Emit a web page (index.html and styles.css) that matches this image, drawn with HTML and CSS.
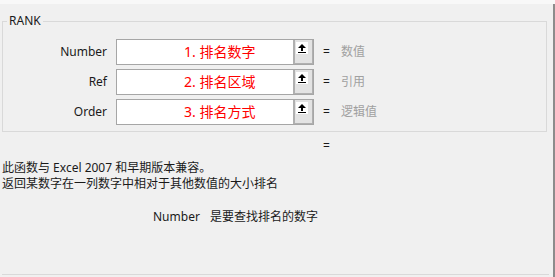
FILE: index.html
```html
<!DOCTYPE html>
<html lang="zh-CN">
<head>
    <meta charset="UTF-8">
    <title>函数参数 - RANK</title>
    <link rel="stylesheet" href="styles.css">
</head>
<body>
    <div class="top-strip"></div>

    <div class="dialog">
        <!-- 参数区 -->
        <fieldset class="args">
            <legend>RANK</legend>
            <div class="arg-grid">
                <div class="arg-label">Number</div>
                <div class="arg-field">
                    <div class="arg-text">1. 排名数字</div>
                    <div class="ref-btn">
                        <svg width="12" height="12" viewBox="0 0 12 12">
                            <rect width="12" height="12" fill="#fff"/>
                            <polygon points="2,6 6,2 10,6" fill="#000"/>
                            <rect x="5" y="5" width="2" height="4" fill="#000"/>
                            <rect x="2" y="10" width="8" height="1" fill="#000"/>
                        </svg>
                    </div>
                </div>
                <div class="arg-eq">=</div>
                <div class="arg-value">数值</div>

                <div class="arg-label">Ref</div>
                <div class="arg-field">
                    <div class="arg-text">2. 排名区域</div>
                    <div class="ref-btn">
                        <svg width="12" height="12" viewBox="0 0 12 12">
                            <rect width="12" height="12" fill="#fff"/>
                            <polygon points="2,6 6,2 10,6" fill="#000"/>
                            <rect x="5" y="5" width="2" height="4" fill="#000"/>
                            <rect x="2" y="10" width="8" height="1" fill="#000"/>
                        </svg>
                    </div>
                </div>
                <div class="arg-eq">=</div>
                <div class="arg-value">引用</div>

                <div class="arg-label">Order</div>
                <div class="arg-field">
                    <div class="arg-text">3. 排名方式</div>
                    <div class="ref-btn">
                        <svg width="12" height="12" viewBox="0 0 12 12">
                            <rect width="12" height="12" fill="#fff"/>
                            <polygon points="2,6 6,2 10,6" fill="#000"/>
                            <rect x="5" y="5" width="2" height="4" fill="#000"/>
                            <rect x="2" y="10" width="8" height="1" fill="#000"/>
                        </svg>
                    </div>
                </div>
                <div class="arg-eq">=</div>
                <div class="arg-value">逻辑值</div>
            </div>
        </fieldset>

        <div class="result">=</div>

        <!-- 函数说明 -->
        <div class="desc">
            <div>此函数与 Excel 2007 和早期版本兼容。</div>
            <div>返回某数字在一列数字中相对于其他数值的大小排名</div>
        </div>

        <div class="arg-help">
            <span class="arg-help-name">Number</span>
            <span>是要查找排名的数字</span>
        </div>

        <div class="bottom-rule"></div>
    </div>
</body>
</html>
```

FILE: styles.css
```css
:root {
    --bg-color: #f0f0f0;
    --line-color: #d9d9d9;
    --field-border: #a6a6a6;
    --hint-color: #a0a0a0;
}

body {
    margin: 0;
    padding: 0;
    width: 555px;
    height: 277px;
    overflow: hidden;
    background: var(--bg-color);
    font-family: 'Noto Sans', 'Noto Sans CJK SC', sans-serif;
    font-size: 12px;
    line-height: 16px;
    color: #1a1a1a;
}

.top-strip {
    height: 4px;
    background: #f8f8f8;
}

.dialog {
    height: 273px;
    box-sizing: border-box;
    border-right: 2px solid #8c8c8c;
    padding-bottom: 2px;
    display: flex;
    flex-direction: column;
}

/* 参数区 */
.args {
    margin: 9px 6px 0 2px;
    padding: 10px 0 6px 0;
    border: 1px solid var(--line-color);
    min-width: 0;
}

.args legend {
    margin-left: 4px;
    padding: 0 2px;
    line-height: 16px;
}

.arg-grid {
    display: grid;
    grid-template-columns: 104px 198px 9px auto;
    column-gap: 9px;
    row-gap: 4px;
    align-items: center;
}

.arg-label {
    text-align: right;
}

.arg-field {
    height: 26px;
    box-sizing: border-box;
    display: flex;
    background: #fff;
    border: 1px solid var(--field-border);
}

.arg-text {
    flex: 1;
    padding-left: 67px;
    font-size: 14px;
    line-height: 24px;
    color: #ff0000;
    white-space: nowrap;
}

.ref-btn {
    width: 20px;
    box-sizing: border-box;
    background: #e3e3e3;
    border-left: 2px solid #b0b0b0;
    border-right: 1px solid #b0b0b0;
    border-bottom: 1px solid #b0b0b0;
    display: flex;
    justify-content: flex-start;
    align-items: flex-start;
    padding: 2px 0 0 1px;
}

.ref-btn svg {
    display: block;
}

.arg-eq {
    text-align: left;
}

.arg-value {
    color: var(--hint-color);
}

/* 结果 & 说明 */
.result {
    margin-top: 6px;
    padding-left: 323px;
}

.desc {
    margin-top: 6px;
    padding-left: 2px;
}

.arg-help {
    margin-top: 17px;
    padding-left: 153px;
    display: flex;
    gap: 10px;
}

.bottom-rule {
    margin: auto 4px 0 2px;
    height: 1px;
    background: var(--line-color);
}
```
